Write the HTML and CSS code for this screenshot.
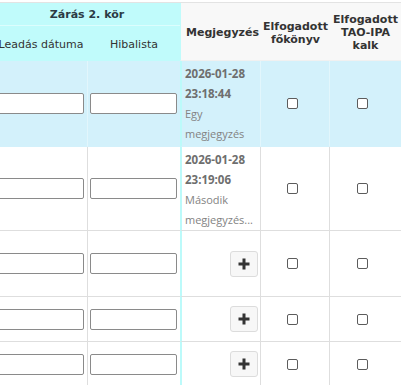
FILE: index.html
```html
<!DOCTYPE html>
<html lang="hu">
<head>
<meta charset="utf-8">
<title>Zárás 2. kör</title>
<link rel="stylesheet" href="styles.css">
</head>
<body>
<div class="viewport">
  <div class="grid">
    <div class="th th-group">Zárás 2. kör</div>
    <div class="th th-side th-meg">Megjegyzés</div>
    <div class="th th-side th-d">Elfogadott<br>főkönyv</div>
    <div class="th th-side th-e">Elfogadott<br>TAO-IPA<br>kalk</div>
    <div class="th th-sub th-a">Leadás dátuma</div>
    <div class="th th-sub th-b">Hibalista</div>

    <div class="row row-active row-h1">
      <div class="td td-a"><input class="field" type="text"></div>
      <div class="td td-b"><input class="field" type="text"></div>
      <div class="td td-meg">
        <div class="note">
          <span class="stamp">2026-01-28</span>
          <span class="stamp">23:18:44</span>
          <span class="comment">Egy megjegyzés</span>
        </div>
      </div>
      <div class="td td-chk"><input class="chk" type="checkbox"></div>
      <div class="td td-chk td-last"><input class="chk" type="checkbox"></div>
    </div>

    <div class="row row-h2">
      <div class="td td-a"><input class="field" type="text"></div>
      <div class="td td-b"><input class="field" type="text"></div>
      <div class="td td-meg">
        <div class="note">
          <span class="stamp">2026-01-28</span>
          <span class="stamp">23:19:06</span>
          <span class="comment">Második megjegyzés...</span>
        </div>
      </div>
      <div class="td td-chk"><input class="chk" type="checkbox"></div>
      <div class="td td-chk td-last"><input class="chk" type="checkbox"></div>
    </div>

    <div class="row row-h3">
      <div class="td td-a"><input class="field" type="text"></div>
      <div class="td td-b"><input class="field" type="text"></div>
      <div class="td td-meg td-action"><button class="add" type="button" aria-label="Megjegyzés hozzáadása"><svg viewBox="0 0 12 12" width="12" height="12"><path d="M6 0.5V11.5M0.5 6H11.5" stroke="#333" stroke-width="3"/></svg></button></div>
      <div class="td td-chk"><input class="chk" type="checkbox"></div>
      <div class="td td-chk td-last"><input class="chk" type="checkbox"></div>
    </div>

    <div class="row row-h4">
      <div class="td td-a"><input class="field" type="text"></div>
      <div class="td td-b"><input class="field" type="text"></div>
      <div class="td td-meg td-action"><button class="add" type="button" aria-label="Megjegyzés hozzáadása"><svg viewBox="0 0 12 12" width="12" height="12"><path d="M6 0.5V11.5M0.5 6H11.5" stroke="#333" stroke-width="3"/></svg></button></div>
      <div class="td td-chk"><input class="chk" type="checkbox"></div>
      <div class="td td-chk td-last"><input class="chk" type="checkbox"></div>
    </div>

    <div class="row row-h4">
      <div class="td td-a"><input class="field" type="text"></div>
      <div class="td td-b"><input class="field" type="text"></div>
      <div class="td td-meg td-action"><button class="add" type="button" aria-label="Megjegyzés hozzáadása"><svg viewBox="0 0 12 12" width="12" height="12"><path d="M6 0.5V11.5M0.5 6H11.5" stroke="#333" stroke-width="3"/></svg></button></div>
      <div class="td td-chk"><input class="chk" type="checkbox"></div>
      <div class="td td-chk td-last"><input class="chk" type="checkbox"></div>
    </div>
  </div>
</div>
</body>
</html>
```
FILE: styles.css
```css
* { box-sizing: border-box; }

html, body {
  margin: 0;
  padding: 0;
  background: #fff;
  overflow: hidden;
}

.viewport {
  width: 401px;
  height: 385px;
  overflow: hidden;
  padding-top: 2px;
}

.grid {
  display: grid;
  grid-template-columns: 94px 92px 81px 69px 71px;
  grid-template-rows: 23px 35px;
  margin-left: -6px;
  border-top: 1px solid #e3e3e3;
  font-family: "Open Sans", "DejaVu Sans", sans-serif;
  font-size: 11px;
}

.th {
  font-family: "DejaVu Sans", Verdana, sans-serif;
  font-size: 11px;
  line-height: 13px;
  color: #333;
  display: flex;
  align-items: center;
  justify-content: center;
  text-align: center;
}

.th-group {
  grid-column: 1 / 3;
  grid-row: 1;
  background: #c0fbfb;
  font-weight: bold;
  color: #2b3a44;
  border-bottom: 1px solid #dcfdfd;
}

.th-sub {
  grid-row: 2;
  background: #c0fbfb;
  color: #333;
  border-bottom: 1px solid #c0fbfb;
  padding-top: 2px;
}

.th-a { grid-column: 1; }
.th-b { grid-column: 2; }

.th-side {
  grid-row: 1 / 3;
  background: #f8f8f8;
  font-weight: bold;
  border-bottom: 1px solid #f0f0f0;
  padding-top: 2px;
}

.th-meg { grid-column: 3; justify-content: flex-start; padding-left: 5px; border-left: 1px solid #c0fbfb; }
.th-d { grid-column: 4; }
.th-e { grid-column: 5; }

.row { display: contents; }

.td {
  display: flex;
  align-items: center;
  background: #fff;
  border-bottom: 1px solid #dedede;
  border-right: 1px solid #dedede;
}

.row-h1 .td { height: 86px; }
.row-h2 .td { height: 84px; }
.row-h3 .td { height: 66px; }
.row-h4 .td { height: 45px; }

.row-active .td {
  background: #d3f1fb;
  border-bottom-color: #d3f1fb;
  border-right-color: #e2f6fc;
}

.td-a { padding: 0 3px; }
.td-b { padding: 0 3px 0 2px; border-right: none; }

.row-active .td-meg, .td-meg {
  border-left: 2px solid #bcfafa;
  border-right-color: #dedede;
  padding: 3px 2px 3px 3px;
  align-items: flex-start;
}

.row-active .td-meg { border-right-color: #e2f6fc; }

.td-action { align-items: center; justify-content: flex-end; }

.field {
  display: block;
  width: 100%;
  height: 21px;
  margin: 0;
  padding: 0 4px;
  border: 1px solid #8a8a8a;
  border-radius: 2px;
  background: #fff;
  font: inherit;
}

.note {
  display: flex;
  flex-direction: column;
  line-height: 20px;
  color: #838383;
}

.stamp {
  font-weight: bold;
  font-size: 11.5px;
  color: #6e6e6e;
}

.comment {
  width: 70px;
}

.td-chk {
  justify-content: center;
  padding-right: 6px;
}

.td-last { border-right: none; }

.chk {
  appearance: none;
  -webkit-appearance: none;
  width: 11px;
  height: 11px;
  margin: 0;
  border: 1px solid #5c5c5c;
  border-radius: 2px;
  background: #fff;
}

.add {
  width: 28px;
  height: 26px;
  margin: 0;
  padding: 0;
  display: flex;
  align-items: center;
  justify-content: center;
  background: #f7f7f7;
  border: 1px solid #dcdcdc;
  border-radius: 3px;
}

.add svg { display: block; }
```
